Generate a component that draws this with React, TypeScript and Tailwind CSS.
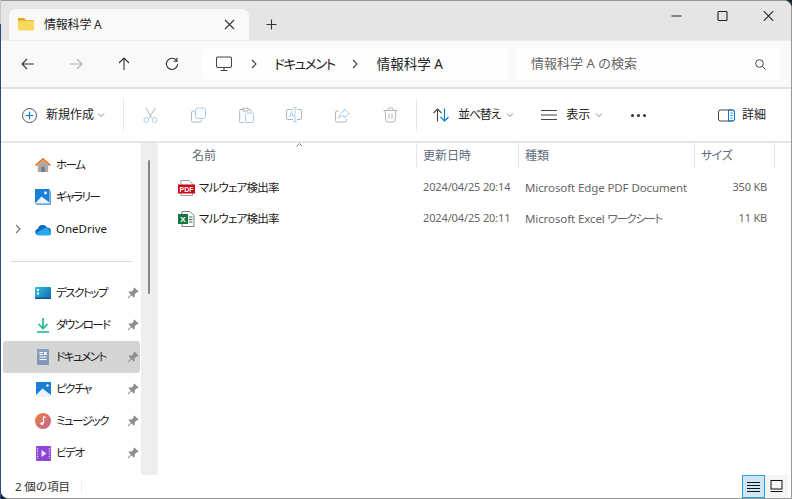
import React from "react";

const font = { fontFamily: '"Noto Sans", "Noto Sans CJK JP", sans-serif' };

function Chev() {
  return (
    <svg width="8" height="8" viewBox="0 0 8 8" fill="none" stroke="#8a8a8a" strokeWidth="1">
      <path d="M1 2.5 L4 5.5 L7 2.5" />
    </svg>
  );
}
function Crumb() {
  return (
    <svg width="10" height="10" viewBox="0 0 10 10" fill="none" stroke="#444" strokeWidth="1.1">
      <path d="M3 1 L7 5 L3 9" />
    </svg>
  );
}
function Pin() {
  return (
    <svg width="12" height="12" viewBox="0 0 12 12" fill="#868e96">
      <path d="M7.4 0.4 L11.6 4.6 L10.6 5.6 L9.6 5.2 L7.6 7.2 L7.8 9.4 L6.6 10.4 L4.4 8.2 L1.2 11.4 L0.6 10.8 L3.8 7.6 L1.6 5.4 L2.6 4.2 L4.8 4.4 L6.8 2.4 L6.4 1.4 Z" />
    </svg>
  );
}
function NavIcon({ d, color = "#333" }: { d: string; color?: string }) {
  return (
    <svg width="16" height="16" viewBox="0 0 16 16" fill="none" stroke={color} strokeWidth="1.1">
      <path d={d} />
    </svg>
  );
}
const G = "#b5b5b5";
const B = "#a5d0f3";

function CmdDisabled({ children }: { children: React.ReactNode }) {
  return <div className="w-[48px] h-[18px] flex items-center justify-center">{children}</div>;
}

function SideRow({ icon, label, pin, sel, chev, latin }: { icon: React.ReactNode; label: string; pin?: boolean; sel?: boolean; chev?: boolean; latin?: boolean }) {
  return (
    <div className="h-[32px] flex items-center pl-[2px] pr-[1px]">
      <div className={`h-[32px] w-[137px] flex items-center rounded-[3px] ${sel ? "bg-[#d5d5d5]" : ""}`}>
        <div className="w-[11px] ml-[11px] flex items-center">
          {chev && (
            <svg width="8" height="10" viewBox="0 0 8 10" fill="none" stroke="#777" strokeWidth="1.2">
              <path d="M2 1 L6 5 L2 9" />
            </svg>
          )}
        </div>
        <div className="ml-[10px] w-[16px] h-[16px] flex items-center justify-center shrink-0">{icon}</div>
        <div className={`ml-[5px] text-[#1a1a1a] flex-1 whitespace-nowrap [font-feature-settings:'palt'] ${latin ? "text-[11.5px] tracking-[0px] mb-[1px]" : "text-[11.5px] tracking-[-1.5px]"}`}>{label}</div>
        {pin && <div className="mr-[1px] flex"><Pin /></div>}
      </div>
    </div>
  );
}

const HomeI = (
  <svg width="17" height="17" viewBox="0 0 17 17">
    <path d="M3 8 V15.5 H14 V8 L8.5 3 Z" fill="#a9a9a9" />
    <rect x="6.5" y="10" width="4" height="5.5" fill="#7d7d7d" />
    <path d="M0.8 8.5 L8.5 1.5 L16.2 8.5" fill="none" stroke="#e8781f" strokeWidth="2" />
  </svg>
);
const GalleryI = (
  <svg width="16" height="16" viewBox="0 0 16 16">
    <rect x="0" y="0" width="14.5" height="14.5" fill="#1a7fd8" />
    <path d="M0 14.5 L6.5 7.5 L14.5 13.5 V14.5 Z" fill="#eaf4fc" />
    <circle cx="10.5" cy="4" r="1.4" fill="#fff" />
    <rect x="1" y="14.5" width="15" height="1.5" fill="#6aa8dc" />
    <rect x="14.5" y="2" width="1.5" height="13" fill="#6aa8dc" />
  </svg>
);
const CloudI = (
  <svg width="17" height="13" viewBox="0 0 17 13">
    <path d="M3.5 12.5 A3.5 3.5 0 0 1 3 5.6 A5.4 5.4 0 0 1 12.8 4.4 A4.2 4.2 0 0 1 14.5 12.5 Z" fill="#0f6cbd" />
    <path d="M3.5 12.5 H14.8 A2.4 2.4 0 0 0 15 7.6 A3.8 3.8 0 0 0 8 6.6 L3 9.2 A1.8 1.8 0 0 0 3.5 12.5 Z" fill="#28a8ea" />
  </svg>
);
const DesktopI = (
  <svg width="16" height="12" viewBox="0 0 16 12">
    <defs>
      <linearGradient id="dk" x1="0" y1="0" x2="1" y2="0.6">
        <stop offset="0" stopColor="#2dc4dc" />
        <stop offset="1" stopColor="#1a74b8" />
      </linearGradient>
    </defs>
    <rect width="16" height="12" rx="1" fill="url(#dk)" />
    <rect x="2" y="2" width="2" height="2" fill="#fff" />
    <rect x="2" y="5.5" width="2" height="2" fill="#fff" />
    <rect x="0" y="10.5" width="16" height="1.5" fill="#125a96" />
  </svg>
);
const DownI = (
  <svg width="14" height="15" viewBox="0 0 14 15" fill="none" stroke="#1fb58f" strokeWidth="1.6">
    <path d="M7 0 V10 M2.5 6 L7 10.5 L11.5 6 M1 14 H13" />
  </svg>
);
const DocI = (
  <svg width="12" height="16" viewBox="0 0 12 16">
    <defs>
      <linearGradient id="doc" x1="0" y1="0" x2="0" y2="1">
        <stop offset="0" stopColor="#8aa4c4" />
        <stop offset="1" stopColor="#7f96b4" />
      </linearGradient>
    </defs>
    <rect width="12" height="16" rx="1" fill="url(#doc)" />
    <path d="M2.5 3.5 H6 M2.5 5.5 H6 M2.5 8 H9.5 M2.5 10.5 H9.5" stroke="#fff" strokeWidth="1" />
    <rect x="7" y="3" width="2.5" height="3" fill="#fff" />
  </svg>
);
const PicI = (
  <svg width="15" height="15" viewBox="0 0 15 15">
    <rect width="15" height="15" fill="#1a7fd4" />
    <path d="M0 13 L6.5 6.5 L15 13 V15 H0 Z" fill="#eaf4fc" />
    <circle cx="11.5" cy="3.5" r="1.2" fill="#fff" />
  </svg>
);
const MusicI = (
  <svg width="16" height="16" viewBox="0 0 16 16">
    <defs>
      <linearGradient id="m" x1="0" y1="0" x2="1" y2="1">
        <stop offset="0" stopColor="#ef8138" />
        <stop offset="1" stopColor="#c4609c" />
      </linearGradient>
    </defs>
    <circle cx="8" cy="8" r="8" fill="url(#m)" />
    <path d="M8.5 3.5 V10 M8.5 3.5 L11 4.5" stroke="#fff" strokeWidth="1.2" fill="none" />
    <circle cx="7" cy="10.5" r="1.6" fill="#fff" />
  </svg>
);
const VideoI = (
  <svg width="15" height="15" viewBox="0 0 15 15">
    <rect width="15" height="15" rx="1" fill="#8d45d6" />
    <path d="M5.5 4 L10.5 7.5 L5.5 11 Z" fill="#f1e3ff" />
    <path d="M1.5 2 V13 M13.5 2 V13" stroke="#d9bdf5" strokeWidth="1.4" strokeDasharray="1.4 1.2" />
  </svg>
);
const PdfI = (
  <svg width="17" height="16" viewBox="0 0 17 16">
    <path d="M3 0.5 H11 L14.5 4 V15.5 H3 Z" fill="#fff" stroke="#9a9a9a" />
    <rect x="0" y="4.5" width="17" height="9" fill="#d0021b" />
    <text x="8.5" y="11.5" textAnchor="middle" fontSize="7" fontWeight="700" fill="#fff" fontFamily="Liberation Sans">PDF</text>
  </svg>
);
const XlsI = (
  <svg width="17" height="16" viewBox="0 0 17 16">
    <path d="M4 0.5 H12 L16 4.5 V15.5 H4 Z" fill="#fff" stroke="#7f7f7f" />
    <rect x="0" y="3" width="10" height="10" fill="#1a7444" />
    <text x="5" y="11" textAnchor="middle" fontSize="8" fontWeight="700" fill="#fff" fontFamily="Liberation Sans">X</text>
    <path d="M11 6 H14.5 M11 8.5 H14.5 M11 11 H14.5" stroke="#1a7444" strokeWidth="1" />
  </svg>
);

function FileRow({ icon, date, type, size }: { icon: React.ReactNode; date: string; type: React.ReactNode; size: string }) {
  return (
    <div className="h-[31px] flex items-center text-[11.5px]">
      <div className="w-[258px] flex items-center shrink-0 pl-[20px]">
        <div className="w-[17px] flex">{icon}</div>
        <div className="ml-[4px] text-[#1a1a1a] tracking-[-0.8px] [font-feature-settings:'palt']">マルウェア検出率</div>
      </div>
      <div className="w-[102px] pl-[7px] shrink-0 text-[#666] text-[11px] tracking-[-0.13px] whitespace-nowrap">{date}</div>
      <div className="w-[176px] pl-[7px] shrink-0 text-[#666] text-[11.5px] tracking-[-0.1px] whitespace-nowrap [font-feature-settings:'palt']">{type}</div>
      <div className="w-[80px] pr-[7px] shrink-0 text-right text-[#666] text-[11px] tracking-[-0.2px]">{size}</div>
    </div>
  );
}

export default function App() {
  return (
    <div className="w-[792px] h-[499px] bg-[#162238] overflow-hidden flex" style={font}>
      <div className="w-px flex flex-col shrink-0">
        <div className="h-[24px] bg-[#c8c8c8]" />
        <div className="flex-1 bg-[#2a4c8c]" />
      </div>
      <div className="w-[791px] h-[499px] flex flex-col bg-white rounded-tr-[8px] rounded-bl-[8px] border-t border-r border-[#999] border-b overflow-hidden">
        {/* tab strip */}
        <div className="h-[39px] bg-[#e5e5e5] flex items-end shrink-0">
          <div className="ml-[8px] w-[240px] h-[31px] bg-[#f9f9f9] rounded-t-[7px] flex items-center pl-[9px] pr-[14px] shrink-0">
            <svg width="16" height="14" viewBox="0 0 16 14" className="mb-[1px]">
              <path d="M0 1 H6 L8 3 H16 V13 H0 Z" fill="#e6a514" />
              <rect x="0" y="3.5" width="16" height="10" rx="1" fill="#fbd75f" />
            </svg>
            <div className="ml-[10px] text-[12px] text-[#222] flex-1 tracking-[-0.2px]">情報科学 A</div>
            <svg width="11" height="11" viewBox="0 0 11 11" stroke="#333" fill="none" strokeWidth="1.1">
              <path d="M1 1 L10 10 M10 1 L1 10" />
            </svg>
          </div>
          <div className="h-[31px] flex items-center ml-[17px]">
            <svg width="11" height="11" viewBox="0 0 11 11" stroke="#333" fill="none" strokeWidth="1.1">
              <path d="M5.5 0.5 V10.5 M0.5 5.5 H10.5" />
            </svg>
          </div>
          <div className="flex-1" />
          <div className="h-[39px] flex items-start pt-[10px]">
            <div className="w-[46px] flex justify-center">
              <svg width="11" height="10" viewBox="0 0 11 10" stroke="#222" fill="none" strokeWidth="1.2"><path d="M0.5 5 H10.5" /></svg>
            </div>
            <div className="w-[46px] flex justify-center">
              <svg width="11" height="10" viewBox="0 0 11 10" stroke="#222" fill="none" strokeWidth="1.1"><rect x="1" y="0.5" width="9" height="9" rx="1" /></svg>
            </div>
            <div className="w-[46px] flex justify-center">
              <svg width="11" height="10" viewBox="0 0 11 10" stroke="#222" fill="none" strokeWidth="1.1"><path d="M0.8 0.2 L10.2 9.8 M10.2 0.2 L0.8 9.8" /></svg>
            </div>
          </div>
        </div>
        {/* nav row */}
        <div className="h-[49px] bg-[#f9f9f9] border-t border-[#ececec] border-b-2 border-b-[#e0e0e0] flex items-center shrink-0 box-border">
          <div className="flex items-center pl-[19px]">
            <NavIcon d="M14 8 H2 M7 3 L2 8 L7 13" />
            <div className="ml-[32px]"><NavIcon color="#b4b4b4" d="M2 8 H14 M9 3 L14 8 L9 13" /></div>
            <div className="ml-[32px]"><NavIcon d="M8 14 V2 M3 7 L8 2 L13 7" /></div>
            <div className="ml-[32px]"><NavIcon d="M12.8 5 A5.6 5.6 0 1 0 13.6 8 M13 1.8 V5.2 H9.6" /></div>
          </div>
          <div className="ml-[22px] w-[306px] h-[32px] bg-white/80 rounded-[4px] flex items-center pl-[14px] text-[13.5px] text-[#222]">
            <svg width="16" height="16" viewBox="0 0 16 16" fill="none" stroke="#444" strokeWidth="1.1">
              <rect x="0.5" y="1" width="15" height="10.5" rx="1.5" />
              <path d="M8 11.5 V14.5 M4.5 14.5 H11.5" />
            </svg>
            <div className="ml-[17px] flex"><Crumb /></div>
            <div className="ml-[15px] tracking-[-1.35px] [font-feature-settings:'palt']">ドキュメント</div>
            <div className="ml-[15px] flex"><Crumb /></div>
            <div className="ml-[17px]">情報科学 A</div>
          </div>
          <div className="ml-[8px] w-[264px] h-[32px] bg-white/80 rounded-[4px] flex items-center pl-[15px] pr-[14px] text-[13px] text-[#666]">
            <div className="flex-1">情報科学 A の検索</div>
            <svg width="11" height="11" viewBox="0 0 11 11" fill="none" stroke="#444" strokeWidth="1">
              <circle cx="4.5" cy="4.5" r="3.8" /><path d="M7.3 7.3 L10.5 10.5" />
            </svg>
          </div>
        </div>
        {/* command bar */}
        <div className="h-[54px] bg-white border-b-2 border-[#e6e6e6] flex items-center shrink-0 text-[12px] text-[#222]">
          <div className="ml-[21px] flex items-center w-[101px] shrink-0">
            <svg width="15" height="15" viewBox="0 0 15 15" fill="none">
              <circle cx="7.5" cy="7.5" r="7" stroke="#555" strokeWidth="1" />
              <path d="M7.5 3.8 V11.2 M3.8 7.5 H11.2" stroke="#0078d4" strokeWidth="1.2" />
            </svg>
            <div className="ml-[9px]">新規作成</div>
            <div className="ml-[3px] flex"><Chev /></div>
          </div>
          <div className="w-px h-[32px] bg-[#e5e5e5] shrink-0" />
          <div className="flex items-center ml-[2px] shrink-0">
            <CmdDisabled>
              <svg width="15" height="16" viewBox="0 0 15 16" fill="none" strokeWidth="1">
                <path d="M2.5 0.5 L9 11 M12.5 0.5 L6 11" stroke={G} />
                <circle cx="3.3" cy="13" r="2.4" stroke={B} /><circle cx="11.7" cy="13" r="2.4" stroke={B} />
              </svg>
            </CmdDisabled>
            <CmdDisabled>
              <svg width="15" height="16" viewBox="0 0 15 16" fill="none" strokeWidth="1">
                <path d="M3.5 4 H2 A1.5 1.5 0 0 0 0.5 5.5 V13.5 A1.5 1.5 0 0 0 2 15 H9 A1.5 1.5 0 0 0 10.5 13.5 V12.5" stroke={G} />
                <rect x="4.5" y="1" width="10" height="10.5" rx="2" stroke={B} />
              </svg>
            </CmdDisabled>
            <CmdDisabled>
              <svg width="15" height="16" viewBox="0 0 15 16" fill="none" strokeWidth="1">
                <path d="M5 2.5 H2 A1 1 0 0 0 0.7 3.5 V14 A1 1 0 0 0 2 15.5 H5 M9.5 2.5 H11 A1 1 0 0 1 12 3.5 V5 M3.8 4 V1.2 H9 V4 Z" stroke={G} />
                <rect x="6.5" y="6" width="8" height="9.5" rx="1.5" stroke={B} />
              </svg>
            </CmdDisabled>
            <CmdDisabled>
              <svg width="16" height="16" viewBox="0 0 16 16" fill="none" strokeWidth="1">
                <path d="M7 2.5 H2 A1.5 1.5 0 0 0 0.5 4 V11 A1.5 1.5 0 0 0 2 12.5 H7 M11 2.5 H14 A1.5 1.5 0 0 1 15.5 4 V11 A1.5 1.5 0 0 1 14 12.5 H11" stroke={G} />
                <path d="M9 0.7 V14.8 M7 0.7 H11 M7 14.8 H11 M3.5 10 L5.5 4.5 L7.5 10 M4.3 8.2 H6.8" stroke={B} />
              </svg>
            </CmdDisabled>
            <CmdDisabled>
              <svg width="15" height="15" viewBox="0 0 15 15" fill="none" strokeWidth="1">
                <path d="M4 3 H2 A1.5 1.5 0 0 0 0.5 4.5 V12.5 A1.5 1.5 0 0 0 2 14 H10 A1.5 1.5 0 0 0 11.5 12.5 V11" stroke={G} />
                <path d="M9 1 L14.5 5.5 L9 10 V7.5 C6.5 7.5 5 8.5 3.7 10.5 C4 7 6 4 9 3.5 Z" stroke={B} />
              </svg>
            </CmdDisabled>
            <CmdDisabled>
              <svg width="15" height="16" viewBox="0 0 15 16" fill="none" stroke={G} strokeWidth="1">
                <path d="M0.5 3.5 H14.5 M5 3.5 V2 A1 1 0 0 1 6 1 H9 A1 1 0 0 1 10 2 V3.5 M2 3.5 L3 14 A1.5 1.5 0 0 0 4.5 15 H10.5 A1.5 1.5 0 0 0 12 14 L13 3.5 M6 6.5 V12 M9 6.5 V12" />
              </svg>
            </CmdDisabled>
          </div>
          <div className="ml-[2px] w-px h-[32px] bg-[#e5e5e5] shrink-0" />
          <div className="ml-[16px] flex items-center shrink-0">
            <svg width="16" height="14" viewBox="0 0 16 14" fill="none" strokeWidth="1.1">
              <path d="M4.5 13.5 V1 M0.5 5 L4.5 1 L8.5 5" stroke="#444" />
              <path d="M11.5 0.5 V13 M7.5 9 L11.5 13 L15.5 9" stroke="#0078d4" />
            </svg>
            <div className="ml-[9px] tracking-[-1.2px] [font-feature-settings:'palt']">並べ替え</div>
            <div className="ml-[6px] flex"><Chev /></div>
          </div>
          <div className="ml-[27px] flex items-center shrink-0">
            <svg width="16" height="12" viewBox="0 0 16 12" stroke="#444" strokeWidth="1"><path d="M0 1.5 H16 M0 6 H16 M0 10.5 H16" /></svg>
            <div className="ml-[9px]">表示</div>
            <div className="ml-[5px] flex"><Chev /></div>
          </div>
          <div className="ml-[28px] flex items-center gap-[3px] shrink-0">
            <div className="w-[3px] h-[3px] rounded-full bg-[#333]" />
            <div className="w-[3px] h-[3px] rounded-full bg-[#333]" />
            <div className="w-[3px] h-[3px] rounded-full bg-[#333]" />
          </div>
          <div className="flex-1" />
          <div className="mr-[25px] flex items-center shrink-0">
            <svg width="17" height="13" viewBox="0 0 17 13" fill="none" strokeWidth="1">
              <rect x="0.5" y="1" width="16" height="11" rx="2" stroke="#444" />
              <path d="M10.5 1 H14.5 A2 2 0 0 1 16.5 3 V10 A2 2 0 0 1 14.5 12 H10.5 Z" stroke="#0078d4" />
              <path d="M12.5 4 H14.5 M12.5 6.5 H14.5 M12.5 9 H14.5" stroke="#0078d4" />
            </svg>
            <div className="ml-[7px]">詳細</div>
          </div>
        </div>
        {/* main */}
        <div className="flex-1 flex min-h-0">
          <div className="w-[140px] shrink-0 flex flex-col pt-[6px] overflow-hidden">
            <SideRow icon={HomeI} label="ホーム" />
            <SideRow icon={GalleryI} label="ギャラリー" />
            <SideRow icon={CloudI} label="OneDrive" chev latin />
            <div className="h-[32px] flex items-center pl-[10px] shrink-0"><div className="h-px w-[121px] bg-[#d9d9d9]" /></div>
            <SideRow icon={DesktopI} label="デスクトップ" pin />
            <SideRow icon={DownI} label="ダウンロード" pin />
            <SideRow icon={DocI} label="ドキュメント" pin sel />
            <SideRow icon={PicI} label="ピクチャ" pin />
            <SideRow icon={MusicI} label="ミュージック" pin />
            <SideRow icon={VideoI} label="ビデオ" pin />
          </div>
          <div className="w-[16px] bg-[#eeeeee] shrink-0 flex justify-center pt-[17px] pr-[1px]">
            <div className="w-[2px] h-[134px] bg-[#868686] rounded-full" />
          </div>
          <div className="flex-1 border-l border-[#f3f3f3] flex flex-col min-w-0">
            <div className="h-[25px] flex text-[12px] text-[#5f6b7a] shrink-0">
              <div className="relative w-[259px] pl-[34px] flex items-center shrink-0 border-r border-[#e5e5e5]">
                名前
                <svg width="7" height="4" viewBox="0 0 7 4" fill="none" stroke="#666" strokeWidth="0.8" className="absolute left-[138px] top-[0px]">
                  <path d="M0.5 3.5 L3.5 0.5 L6.5 3.5" />
                </svg>
              </div>
              <div className="w-[102px] pl-[6px] flex items-center shrink-0 border-r border-[#e5e5e5]">更新日時</div>
              <div className="w-[176px] pl-[6px] flex items-center shrink-0 border-r border-[#e5e5e5]">種類</div>
              <div className="w-[80px] pl-[6px] flex items-center shrink-0 border-r border-[#e5e5e5] tracking-[-0.5px] [font-feature-settings:'palt']">サイズ</div>
            </div>
            <div className="pt-[4px]">
              <FileRow icon={PdfI} date="2024/04/25 20:14" type="Microsoft Edge PDF Document" size="350 KB" />
              <FileRow
                icon={XlsI}
                date="2024/04/25 20:11"
                type={<>Microsoft Excel <span className="tracking-[-1.4px]">ワークシート</span></>}
                size="11 KB"
              />
            </div>
          </div>
        </div>
        {/* status */}
        <div className="h-[23px] bg-white flex items-center shrink-0 text-[11.5px] text-[#333] pl-[14px] pr-[3px]">
          <div className="tracking-[-0.1px]">2 個の項目</div>
          <div className="ml-[11px] w-px h-[12px] bg-[#ececec]" />
          <div className="flex-1" />
          <div className="w-[23px] h-[23px] bg-[#cfe6f5] border border-[#2aa0d8] flex items-center justify-center">
            <svg width="13" height="12" viewBox="0 0 13 12" stroke="#111" strokeWidth="1"><path d="M0 1.5 H13 M0 4.5 H13 M0 7.5 H13 M0 10.5 H13" /></svg>
          </div>
          <div className="w-[23px] h-[23px] bg-[#f5f5f5] flex items-center justify-center">
            <svg width="13" height="13" viewBox="0 0 13 13" fill="none" stroke="#111" strokeWidth="1"><rect x="1" y="0.5" width="11" height="8.5" /><path d="M0.5 11.5 H12.5" /></svg>
          </div>
        </div>
      </div>
    </div>
  );
}
